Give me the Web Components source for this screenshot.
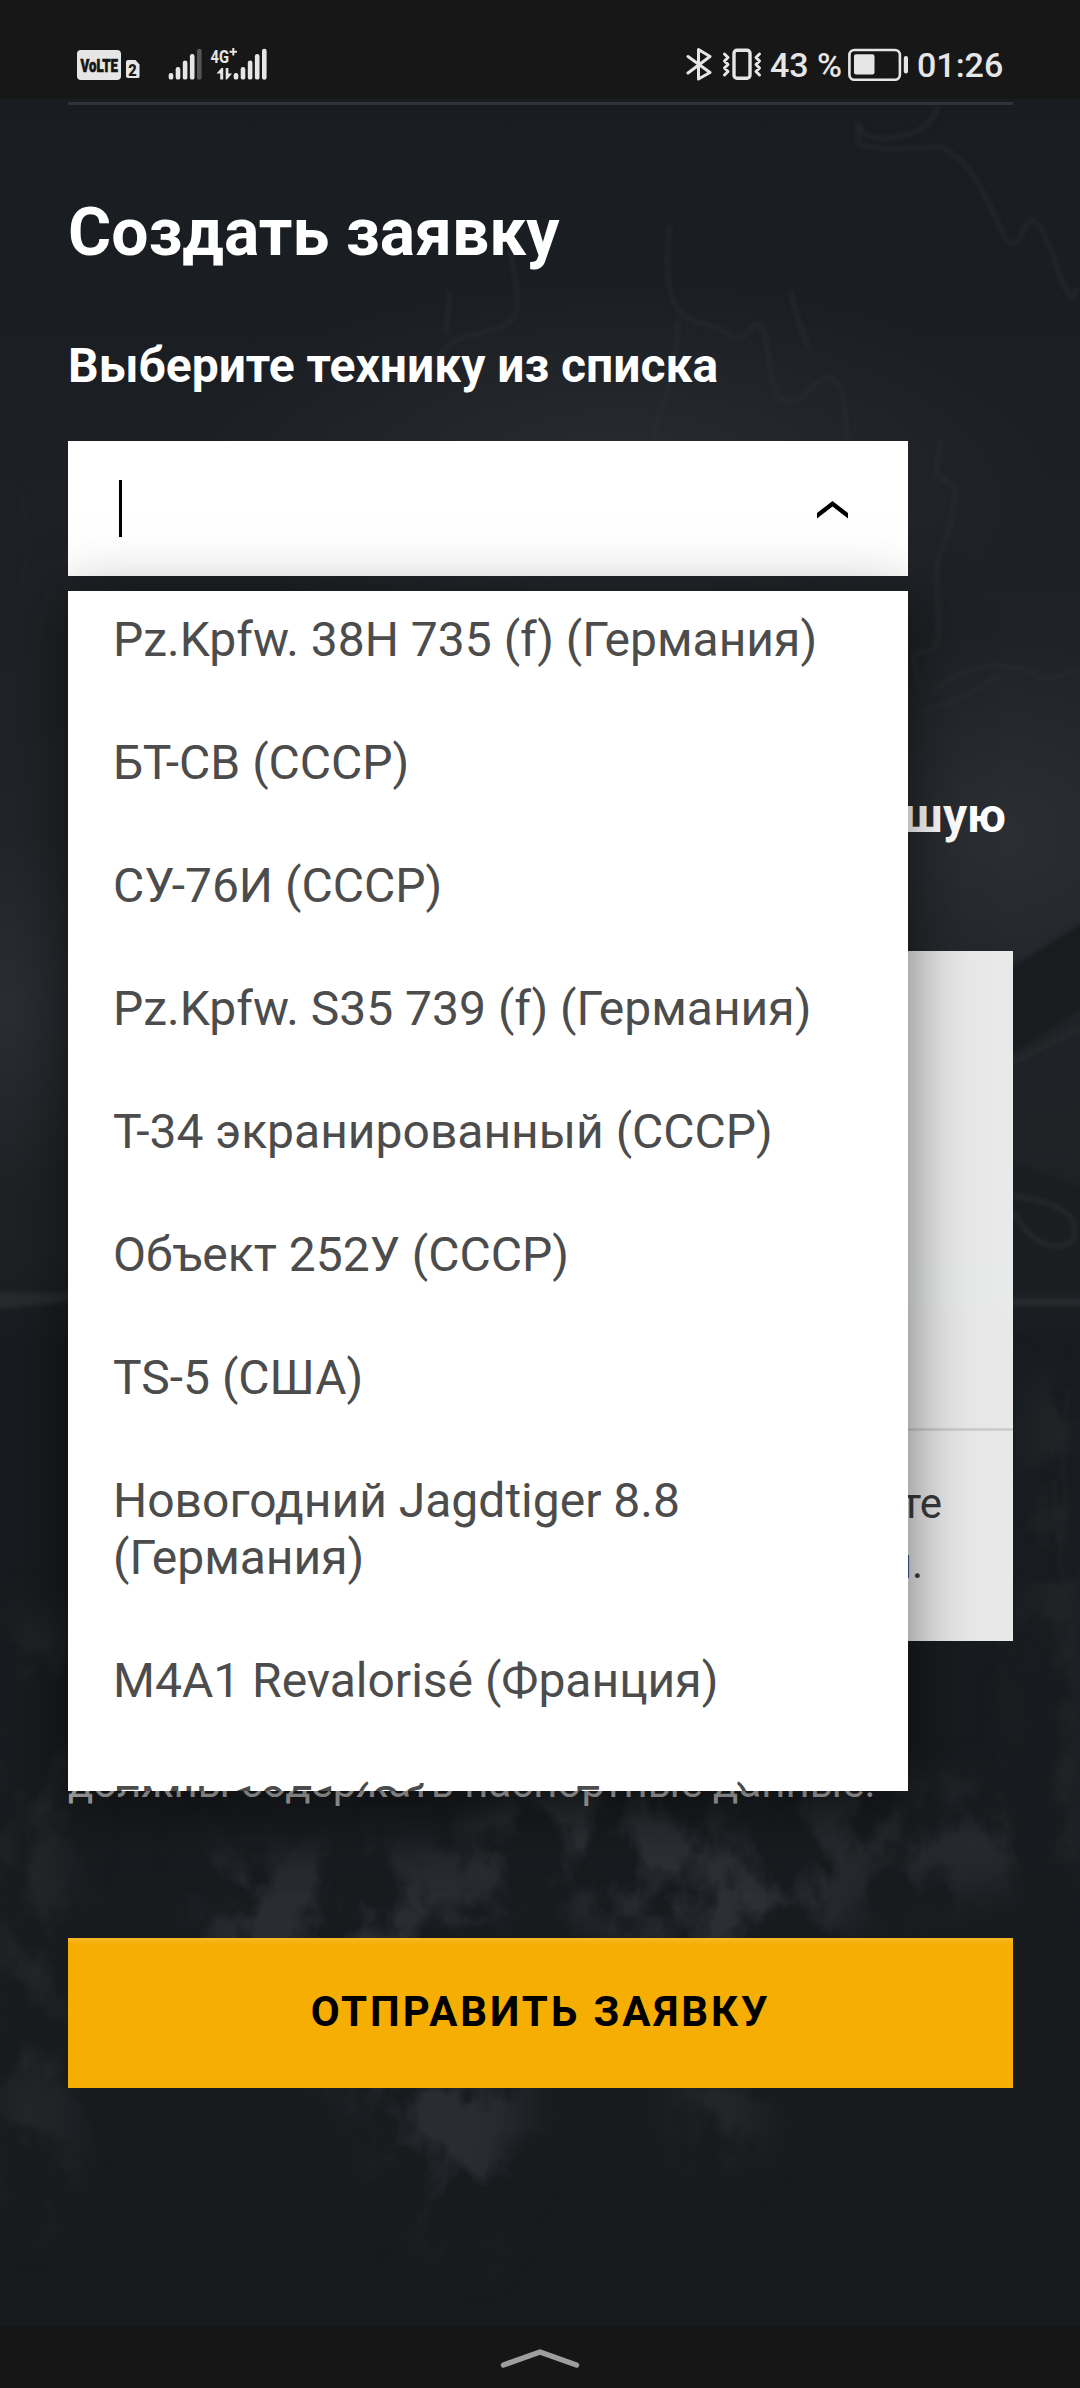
<!DOCTYPE html>
<html lang="ru">
<head>
<meta charset="utf-8">
<meta name="viewport" content="width=device-width, initial-scale=1">
<title>Создать заявку</title>
<style>
  html, body {
    margin: 0;
    padding: 0;
    background: #191c20;
  }
  body {
    font-family: Roboto, "Noto Sans", sans-serif;
    width: 1080px;
    height: 2388px;
    overflow: hidden;
  }
</style>
</head>
<body>
<request-page>
  <status-bar slot="status" battery="43 %" time="01:26"></status-bar>
  <page-heading size="large">Создать заявку</page-heading>
  <page-heading>Выберите технику из списка</page-heading>
  <vehicle-select>
    <vehicle-option>Pz.Kpfw. 38H 735 (f) (Германия)</vehicle-option>
    <vehicle-option>БТ-СВ (СССР)</vehicle-option>
    <vehicle-option>СУ-76И (СССР)</vehicle-option>
    <vehicle-option>Pz.Kpfw. S35 739 (f) (Германия)</vehicle-option>
    <vehicle-option>Т-34 экранированный (СССР)</vehicle-option>
    <vehicle-option>Объект 252У (СССР)</vehicle-option>
    <vehicle-option>TS-5 (США)</vehicle-option>
    <vehicle-option>Новогодний Jagdtiger 8.8 (Германия)</vehicle-option>
    <vehicle-option>M4A1 Revalorisé (Франция)</vehicle-option>
    <vehicle-option>EMIL 1951 (Сборная Европа)</vehicle-option>
  </vehicle-select>
  <page-heading align="end">шую</page-heading>
  <upload-card>
    <span slot="first">те</span>
    <span slot="second">и.</span>
  </upload-card>
  <form-note>должны содержать паспортные данные.</form-note>
  <submit-button>Отправить заявку</submit-button>
  <nav-bar slot="nav"></nav-bar>
</request-page>

<script>
class RequestPage extends HTMLElement {
  connectedCallback() {
    this.attachShadow({ mode: 'open' });
    this.shadowRoot.innerHTML = `
      <style>
        :host {
          display: grid;
          grid-template-rows: 99px 1fr 62px;
          width: 1080px;
          height: 2388px;
        }
        storm-backdrop {
          grid-area: 2 / 1;
        }
        main {
          grid-area: 2 / 1;
          position: relative;
          display: flex;
          flex-direction: column;
          margin: 3px 67px 0 68px;
          border-top: 3px solid #2f3236;
        }
        slot[name="nav"] {
          display: contents;
        }
      </style>
      <slot name="status"></slot>
      <storm-backdrop></storm-backdrop>
      <main><slot></slot></main>
      <slot name="nav"></slot>
    `;
  }
}

class StormBackdrop extends HTMLElement {
  connectedCallback() {
    this.attachShadow({ mode: 'open' });
    this.shadowRoot.innerHTML = `
      <style>
        :host {
          display: block;
          overflow: hidden;
          background: #191c20;
        }
        svg {
          display: block;
        }
        filter {
          color-interpolation-filters: sRGB;
        }
      </style>
      <svg width="1080" height="2227" viewBox="0 99 1080 2227" fill="none">
        <defs>
          <linearGradient id="sky" x1="0" y1="0" x2="0" y2="1">
            <stop offset="0" stop-color="#191c20"/>
            <stop offset=".13" stop-color="#1b1e22"/>
            <stop offset=".34" stop-color="#212428"/>
            <stop offset=".52" stop-color="#1e2124"/>
            <stop offset=".56" stop-color="#181b1f"/>
            <stop offset="1" stop-color="#181b1e"/>
          </linearGradient>
          <radialGradient id="glow">
            <stop offset="0" stop-color="#3a3f46" stop-opacity=".4"/>
            <stop offset="1" stop-color="#3a3f46" stop-opacity="0"/>
          </radialGradient>
          <filter id="thin" x="-10%" y="-10%" width="120%" height="120%"><feGaussianBlur stdDeviation="2"/></filter>
          <filter id="smoke" x="-20%" y="-20%" width="140%" height="140%">
            <feTurbulence type="fractalNoise" baseFrequency=".016 .012" numOctaves="5" seed="11" result="noise"/>
            <feColorMatrix in="noise" values="0 0 0 0 0  0 0 0 0 0  0 0 0 0 0  5 0 0 0 -2.1" result="mask"/>
            <feGaussianBlur in="SourceGraphic" stdDeviation="22" result="cloud"/>
            <feComposite in="cloud" in2="mask" operator="in"/>
          </filter>
        </defs>
        <rect y="99" width="1080" height="2227" fill="url(#sky)"/>
        <ellipse cx="620" cy="470" rx="430" ry="190" fill="url(#glow)"/>
        <ellipse cx="1000" cy="830" rx="230" ry="200" fill="url(#glow)"/>
        <ellipse cx="10" cy="1010" rx="120" ry="180" fill="url(#glow)"/>
        <g filter="url(#thin)">
          <path d="M1005 972 1090 918V1004L1005 1058Z" fill="#191c1f"/>
          <path d="M1005 1160 1090 1190V1290H1005Z" fill="#1b1e21"/>
          <path d="M1013 1196q48 6 60 24 8 26-16 26t-44-34M1013 1062l67-34" stroke="#2a2e31" stroke-width="3"/>
          <path d="M-10 1292H70V1302L-10 1310ZM1005 1298h85v8h-85Z" fill="#272b2e"/>
        </g>
        <g stroke="#2b3033" stroke-opacity=".55" stroke-width="4" stroke-linejoin="round" filter="url(#thin)">
          <path d="M938 105q-6 26-40 32t-40-14v22l28 4 56-2q24 14 36 36t24 48 22-2 30 30 22 28"/>
          <path d="M670 225q-6 50 2 72t28 26 30 12 22-8 18 40 40 22 36 38 30 40M678 320q-2 50-14 82t-12 50M510 250q10 46 6 62t-40 22-40 34M450 290l-4 44M790 290q10 40 20 60"/>
          <path d="M940 440l-4 34 20 14q-6 50-14 60t-4 60-14 44-4 34M930 694q30-28 64-28t44 10 52-14M920 712q40-10 80-38"/>
          <path d="M1068 1390l-6 60 4 50-6 60 8 60M1054 1480l4 60" stroke-opacity=".3"/>
          <path d="M20 490l10 50-14 70M48 590l-10 50" stroke-opacity=".2"/>
        </g>
        <g filter="url(#smoke)">
          <path d="M200 1850h260l60 90v210l-40 110-70-40-50-120-150-130Z" fill="#292c32"/>
          <ellipse cx="600" cy="1850" rx="140" ry="60" fill="#2a2e32"/>
          <ellipse cx="720" cy="1900" rx="130" ry="60" fill="#2c3035"/>
          <ellipse cx="900" cy="1840" rx="150" ry="60" fill="#26292d"/>
          <ellipse cx="720" cy="2110" rx="40" ry="60" fill="#24272a"/>
          <path d="M0 1620h70v600H0ZM1030 1380h50v500h-50Z" fill="#222629"/>
        </g>
      </svg>
    `;
  }
}

class StatusBar extends HTMLElement {
  connectedCallback() {
    this.attachShadow({ mode: 'open' });
    this.shadowRoot.innerHTML = `
      <style>
        :host {
          display: flex;
          justify-content: space-between;
          align-items: flex-start;
          box-sizing: border-box;
          height: 99px;
          padding: 44px 78px 0 77px;
          background: #171717;
          color: #e6e6e6;
          font-size: 34px;
          font-weight: 500;
          line-height: 42px;
        }
        svg {
          display: block;
          font-family: Roboto, sans-serif;
        }
        .right {
          display: flex;
        }
        .battery {
          width: 78px;
          white-space: nowrap;
        }
        .time {
          width: 85px;
          white-space: nowrap;
        }
      </style>
      <svg width="194" height="42" viewBox="77 44 194 42" fill="#e6e6e6">
        <rect x="77" y="50" width="44" height="30" rx="4"/>
        <text x="80.500" y="71.800" font-size="19" font-weight="900" fill="#171717" stroke="#171717" stroke-width=".7" textLength="37.500" lengthAdjust="spacingAndGlyphs">VoLTE</text>
        <path d="M128 60h7.500l4 4.500v12a1.500 1.500 0 0 1-1.500 1.500h-10a2 2 0 0 1-2-2v-14a2 2 0 0 1 2-2Z"/>
        <text x="128.200" y="75.500" font-size="16" font-weight="900" fill="#171717" textLength="8.500" lengthAdjust="spacingAndGlyphs">2</text>
        <g id="sim1">
          <rect x="168.700" y="73" width="4.600" height="6.600" rx="2.200"/>
          <rect x="175.700" y="67" width="4.600" height="12.600" rx="2.200"/>
          <rect x="182.800" y="60.500" width="4.600" height="19.100" rx="2.200"/>
          <rect x="189.900" y="54" width="4.600" height="25.600" rx="2.200"/>
        </g>
        <rect x="197" y="48.700" width="4.600" height="31" rx="2.200" fill="#555"/>
        <use href="#sim1" x="65"/>
        <rect x="262" y="48.700" width="4.600" height="31" rx="2.200"/>
        <text x="210.500" y="62.700" font-size="19" font-weight="700" textLength="18.500" lengthAdjust="spacingAndGlyphs">4G</text>
        <path d="M229.600 51.800h7.400M233.300 48.100v7.400" stroke="#e6e6e6" stroke-width="2"/>
        <path d="M223.200 68v11.600h-3V73.500h-3.700L221.500 68ZM225.700 68h2.700v5.600h3.600l-5 6h-1.300Z"/>
      </svg>
      <div class="right">
        <svg width="84" height="42" viewBox="687 44 84 42" fill="none" stroke="#e6e6e6" stroke-width="3" stroke-linejoin="round" stroke-linecap="round">
          <path d="M689 56.500 711 72.500 699.500 79V49.500L711 56.500 689 73"/>
          <rect x="735" y="50.300" width="16" height="28" rx="3" stroke-width="3.400"/>
          <path d="M725.500 54l3.500 3.500-3.500 3.500 3.500 3.500-3.500 3.500 3.500 3.500-3.500 3.500M760.500 54l-3.500 3.500 3.500 3.500-3.500 3.500 3.500 3.500-3.500 3.500 3.500 3.500"/>
        </svg>
        <span class="battery">${this.getAttribute('battery')}</span>
        <svg width="69" height="42" viewBox="849 44 69 42" fill="none">
          <rect x="850.400" y="50" width="50.500" height="29.800" rx="5" stroke="#e6e6e6" stroke-width="2.600"/>
          <rect x="855" y="54.300" width="20.500" height="20.300" rx="2" fill="#e6e6e6"/>
          <rect x="904.800" y="56" width="4.200" height="17.500" rx="2" fill="#e6e6e6"/>
        </svg>
        <span class="time">${this.getAttribute('time')}</span>
      </div>
    `;
  }
}

class PageHeading extends HTMLElement {
  connectedCallback() {
    this.attachShadow({ mode: 'open' });
    this.shadowRoot.innerHTML = `
      <style>
        :host {
          display: block;
          margin-top: 65px;
          color: #fff;
          font-size: 48px;
          font-weight: 700;
          line-height: 57px;
        }
        :host([size="large"]) {
          margin-top: 88px;
          font-size: 66px;
          line-height: 79px;
        }
        :host([align="end"]) {
          margin-top: 211px;
          padding-right: 7px;
          text-align: right;
        }
      </style>
      <slot></slot>
    `;
  }
}

class VehicleSelect extends HTMLElement {
  connectedCallback() {
    this.attachShadow({ mode: 'open' });
    this.shadowRoot.innerHTML = `
      <style>
        :host {
          display: block;
          position: relative;
          z-index: 2;
          width: 840px;
          margin-top: 47px;
        }
        .control {
          display: flex;
          align-items: center;
          justify-content: space-between;
          box-sizing: border-box;
          height: 135px;
          padding: 0 60px 0 51px;
          background: #fff;
        }
        .control svg {
          margin-top: 3px;
        }
        .caret {
          width: 3px;
          height: 57px;
          background: #000;
        }
        .menu {
          position: absolute;
          top: 150px;
          left: 0;
          width: 840px;
          height: 1200px;
          overflow: hidden;
          background: #fff;
          box-shadow: 0 12px 60px rgba(0, 0, 0, .5);
        }
        /* list is scrolled a little past its first row */
        .list {
          margin-top: -13px;
        }
      </style>
      <div class="control">
        <span class="caret"></span>
        <svg width="31" height="18" viewBox="0 0 31 18"><path d="M15.500 0 31 12v5.500L15.500 5.500 0 17.500V12Z"/></svg>
      </div>
      <div class="menu"><div class="list"><slot></slot></div></div>
    `;
  }
}

class VehicleOption extends HTMLElement {
  connectedCallback() {
    this.attachShadow({ mode: 'open' });
    this.shadowRoot.innerHTML = `
      <style>
        :host {
          display: block;
          padding: 33px 45px;
          color: #4c4c4c;
          font-size: 48px;
          line-height: 57px;
        }
      </style>
      <slot></slot>
    `;
  }
}

class UploadCard extends HTMLElement {
  connectedCallback() {
    this.attachShadow({ mode: 'open' });
    this.shadowRoot.innerHTML = `
      <style>
        :host {
          display: block;
          margin-top: 107px;
          background: rgba(255, 255, 255, .9);
          color: #3a3a3a;
          font-size: 42px;
          line-height: 60px;
          text-align: right;
        }
        .preview {
          height: 477px;
          border-bottom: 3px solid #cfcfcf;
        }
        .hint {
          padding: 43px 71px 47px 0;
        }
        .second {
          padding-right: 19px;
        }
      </style>
      <div class="preview"></div>
      <div class="hint">
        <div><slot name="first"></slot></div>
        <div class="second"><slot name="second"></slot></div>
      </div>
    `;
  }
}

class FormNote extends HTMLElement {
  connectedCallback() {
    this.attachShadow({ mode: 'open' });
    this.shadowRoot.innerHTML = `
      <style>
        :host {
          display: block;
          margin-top: 112px;
          color: #b4b4b4;
          font-size: 42px;
          line-height: 60px;
          white-space: nowrap;
        }
      </style>
      <slot></slot>
    `;
  }
}

class SubmitButton extends HTMLElement {
  connectedCallback() {
    this.attachShadow({ mode: 'open' });
    this.shadowRoot.innerHTML = `
      <style>
        :host {
          display: block;
          margin-top: 125px;
        }
        button {
          display: block;
          width: 100%;
          height: 150px;
          padding: 0 0 3px;
          border: 0;
          background: linear-gradient(#f9b728, #f6ae02 7px);
          color: #000;
          font: 700 42px Roboto, sans-serif;
          letter-spacing: 2.900px;
          text-transform: uppercase;
        }
      </style>
      <button type="button"><slot></slot></button>
    `;
  }
}

class NavBar extends HTMLElement {
  connectedCallback() {
    this.attachShadow({ mode: 'open' });
    this.shadowRoot.innerHTML = `
      <style>
        :host {
          display: flex;
          justify-content: center;
          box-sizing: border-box;
          height: 62px;
          padding-top: 22px;
          background: #161616;
        }
      </style>
      <svg width="80" height="22" viewBox="0 0 80 22" fill="none" stroke="#9e9e9e" stroke-width="5.500" stroke-linecap="round" stroke-linejoin="round"><path d="M3.500 17 40 4l36.500 13"/></svg>
    `;
  }
}

customElements.define('request-page', RequestPage);
customElements.define('storm-backdrop', StormBackdrop);
customElements.define('status-bar', StatusBar);
customElements.define('page-heading', PageHeading);
customElements.define('vehicle-select', VehicleSelect);
customElements.define('vehicle-option', VehicleOption);
customElements.define('upload-card', UploadCard);
customElements.define('form-note', FormNote);
customElements.define('submit-button', SubmitButton);
customElements.define('nav-bar', NavBar);
</script>
</body>
</html>
